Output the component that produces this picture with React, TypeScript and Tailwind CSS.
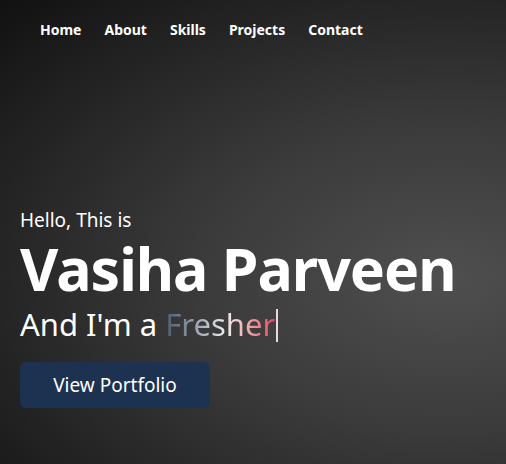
const links = ['Home', 'About', 'Skills', 'Projects', 'Contact'];

export default function App() {
  return (
    <div
      className="w-full h-[464px] overflow-hidden text-white bg-[radial-gradient(ellipse_at_88%_60%,#4f4f4f_0%,#3a3a3a_40%,#111111_100%)]"
      style={{ fontFamily: '"Noto Sans", "Open Sans", sans-serif' }}
    >
      {/* Navbar */}
      <nav className="flex gap-[23px] pl-10 pt-[19px]">
        {links.map(l => (
          <a key={l} href="#" className="text-[14px] font-bold leading-[22px]">
            {l}
          </a>
        ))}
      </nav>

      {/* Hero */}
      <section className="pl-5 pt-[166px]">
        <p className="text-[19px] leading-[26px]">Hello, This is</p>
        <h1 className="text-[59px] font-bold leading-[68px] tracking-[-1px] mt-[1px]">Vasiha Parveen</h1>
        <p className="text-[31px] leading-[40px] mt-[2px]">
          And I'm a{' '}
          <span className="bg-gradient-to-r from-[#4c5b70] via-[#eeeef0] via-55% to-[#e2405f] bg-clip-text text-transparent">
            Fresher
          </span>
          <span className="inline-block w-[2px] h-[33px] align-[-6px] ml-[1px] bg-[#ead9e0]"></span>
        </p>
        <button className="mt-[18px] w-[190px] h-[46px] rounded-md bg-[#1d3251] text-[19px]">
          View Portfolio
        </button>
      </section>
    </div>
  );
}
